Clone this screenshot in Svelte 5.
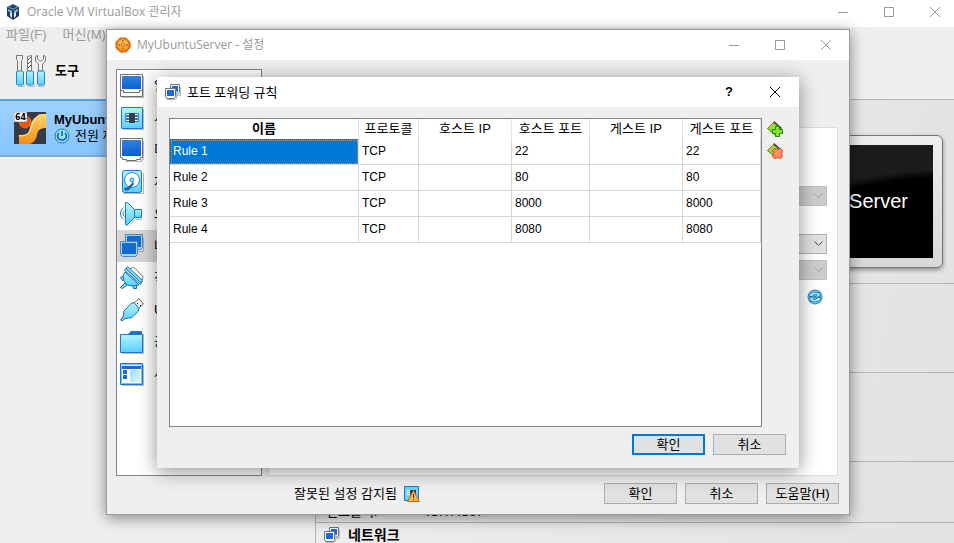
<script lang="ts">
	const categories = [
		{ icon: 'general', label: '일반' },
		{ icon: 'system', label: '시스템' },
		{ icon: 'display', label: '디스플레이' },
		{ icon: 'storage', label: '저장소' },
		{ icon: 'audio', label: '오디오' },
		{ icon: 'network', label: '네트워크' },
		{ icon: 'serial', label: '직렬 포트' },
		{ icon: 'usb', label: 'USB' },
		{ icon: 'folder', label: '공유 폴더' },
		{ icon: 'ui', label: '사용자 인터페이스' }
	];

	const headers = ['이름', '프로토콜', '호스트 IP', '호스트 포트', '게스트 IP', '게스트 포트'];

	const rules = [
		{ name: 'Rule 1', protocol: 'TCP', hostIp: '', hostPort: 22, guestIp: '', guestPort: 22 },
		{ name: 'Rule 2', protocol: 'TCP', hostIp: '', hostPort: 80, guestIp: '', guestPort: 80 },
		{ name: 'Rule 3', protocol: 'TCP', hostIp: '', hostPort: 8000, guestIp: '', guestPort: 8000 },
		{ name: 'Rule 4', protocol: 'TCP', hostIp: '', hostPort: 8080, guestIp: '', guestPort: 8080 }
	];

	let category = $state('network');
	let selected = $state(0);
</script>

{#snippet windowButtons()}
	<div class="window-buttons">
		<button aria-label="최소화"><svg width="16" height="16"><path d="M3 8.500h10" /></svg></button>
		<button aria-label="최대화"><svg width="16" height="16"><path d="M3.500 3.500h9v9h-9z" /></svg></button>
		<button aria-label="닫기"><svg width="16" height="16"><path d="M3 3l10 10M13 3L3 13" /></svg></button>
	</div>
{/snippet}

{#snippet screens()}
	<svg width="16" height="16" viewBox="0 0 16 16">
		<path d="M6 12h10V3h-1v8H6z" fill="#bbb" />
		<path d="M5.500 0.500h9v8l-1 1.500h-7l-1-1.500z" fill="#fff" stroke="#6d727a" />
		<path d="M7 2h6v6H7z" fill="#1565d8" />
		<path d="M2 16h9V7h1v8H2z" fill="#bbb" />
		<path d="M0.500 4.500h10v8l-1 2h-8l-1-2z" fill="#fff" stroke="#6d727a" />
		<path d="M2 6h7v6H2z" fill="#1a6bdc" />
	</svg>
{/snippet}

{#snippet categoryIcon(name: string)}
	<svg width="25" height="25" viewBox="0 0 25 25">
		{#if name === 'general'}
			<path d="M2 23h21V2h1v22H2z" fill="#bbb" />
			<path d="M0.500 0.500h22v22h-22z" fill="#fff" stroke="#6d727a" />
			<path d="M2 2h19v13H2z" fill="url(#deep)" />
			<path d="M0.500 16.500h3v2h16v-2h3" fill="none" stroke="#6d727a" />
		{:else if name === 'system'}
			<path d="M3 23h20V3h1v21H3z" fill="#bbb" />
			<path d="M1.500 1.500h21v21h-21z" fill="url(#sky)" stroke="#1b77d5" />
			<path d="M5.500 7.500h13v2h-13zM5.500 10.500h13v2h-13zM5.500 13.500h13v2h-13z" fill="#fff" stroke="#287dcc" />
			<path d="M9 7h6v10H9z" fill="#353d47" />
		{:else if name === 'display'}
			<path d="M5 23h15l3-3V3h1v18l-3 3H5z" fill="#bbb" />
			<path d="M0.500 0.500h22v19h-2v2h-4v1h-10v-1h-4v-2h-2z" fill="#fff" stroke="#6d727a" />
			<path d="M2 2h19v16H2z" fill="url(#deep)" />
		{:else if name === 'storage'}
			<path d="M3 23h20V3h1v21H3z" fill="#bbb" />
			<rect x="2.500" y="0.500" width="19" height="22" rx="2" fill="url(#sky)" stroke="#1b77d5" />
			<circle cx="12" cy="10" r="7.500" fill="#fff" stroke="#2f87d8" />
			<circle cx="12" cy="10" r="2" fill="#7cdcfd" stroke="#2f87d8" />
			<path d="M4 18l4-1 5-5 1 2-5 6-4 1z" fill="#1767bd" />
		{:else if name === 'audio'}
			<path d="M14 17h8v1H15zM6 23h3l5-6v2l-5 5H6z" fill="#bbb" />
			<path d="M14.500 7.500h7v8h-7z" fill="url(#sky)" stroke="#1b77d5" />
			<path d="M5.500 0.500h2l7 7v8l-7 7h-2z" fill="url(#sky)" stroke="#1b77d5" />
			<path d="M3.500 5.500c-4 3-4 9 0 12M4.500 8.500c-2 2-2 4 0 6" fill="none" stroke="#1b77d5" />
		{:else if name === 'network'}
			<path d="M9 17h14V4h1v14H9z" fill="#aaa" />
			<path d="M5.500 0.500h17v13l-2 2h-13l-2-2z" fill="#9bd9f7" stroke="#5484b0" />
			<path d="M7 2h14v11H7z" fill="#126bd0" />
			<path d="M0.500 7.500h17v13l-2 2h-13l-2-2z" fill="#9bd9f7" stroke="#5484b0" />
			<path d="M2 9h14v11H2z" fill="#126bd0" />
		{:else if name === 'serial'}
			<path d="M9.500 3.500l4-2.500 9.500 9.500-1 4z" fill="#fff" stroke="#777" />
			<path d="M0.500 11.500l4-2 2 3-4 2zM0.500 21.500l5-5 2 2-5 4zM12.500 18.500h4v4h-3z" fill="#7cdcfd" stroke="#1669bc" />
			<path d="M5 6l14 13-6 1-6-1-3-4-1-5z" fill="url(#sky)" stroke="#1669bc" />
			<path d="M4.500 4.500l3-4 15 14-2 4z" fill="#8ce6ff" stroke="#1669bc" />
			<path d="M6 2.500l15 14" stroke="#1669bc" />
		{:else if name === 'usb'}
			<path d="M13 6l6-5.500 4.500 5.500-6 5z" fill="#fff" stroke="#666" />
			<path d="M17 5h1v1h-1zM20 7h1v1h-1z" fill="#333" />
			<path d="M11 5.500l3-1 5 6-1 3-6 6-7 1-3 2.500-1.500-1L3 19l1-6z" fill="url(#sky)" stroke="#1669bc" />
		{:else if name === 'folder'}
			<path d="M2 23h21V4h1v20H2z" fill="#bbb" />
			<path d="M8 4l3-3h11v4H8z" fill="#2871cd" />
			<path d="M0.500 4.500h22v18h-22z" fill="url(#sky)" stroke="#1b77d5" />
		{:else}
			<path d="M2 23h21V3h1v21H2z" fill="#bbb" />
			<path d="M0.500 1.500h22v21h-22z" fill="#fff" stroke="#1b77d5" />
			<path d="M1.500 2.500h20v19h-20z" fill="none" stroke="#64ccf8" />
			<path d="M2 4h19v3H2zM3 8h4v4H3zM3 13h4v4H3z" fill="#1f69cd" />
			<path d="M10 8h10v12H10z" fill="url(#pale)" />
		{/if}
	</svg>
{/snippet}

{#snippet combo(label: string, disabled: boolean)}
	<div class="combo" class:disabled>
		<select aria-label={label} {disabled}><option></option></select>
		<svg width="9" height="6"><path d="M0.500 0.500l4 4 4-4" /></svg>
	</div>
{/snippet}

<svg class="defs" width="0" height="0" aria-hidden="true">
	<defs>
		<linearGradient id="deep" x2="0" y2="1"><stop stop-color="#3481da" /><stop offset="1" stop-color="#0562d6" /></linearGradient>
		<linearGradient id="sky" x2="0" y2="1"><stop stop-color="#b5f4ff" /><stop offset="1" stop-color="#58d0ff" /></linearGradient>
		<linearGradient id="pale" x2="1" y2="1"><stop stop-color="#8de1f8" /><stop offset="1" stop-color="#e1f8ff" /></linearGradient>
		<linearGradient id="gold" x2="0" y2="1"><stop stop-color="#ffd768" /><stop offset="1" stop-color="#f38c16" /></linearGradient>
	</defs>
</svg>

<div class="desktop">
	<main class="manager">
		<header class="titlebar">
			<svg width="16" height="16" viewBox="0 0 16 16">
				<path d="M8 0l6 3v9l-6 4-6-4V3z" fill="#1d3c63" />
				<path d="M2 3l6-3 6 3-6 3z" fill="#688baa" />
				<path d="M4 3l4-2 4 2-4 1z" fill="#173153" />
				<path d="M3 5l4 2v2L3 7zM13 5L9 7v2l4-2z" fill="#9cb9d1" />
				<path d="M5 8l2 1v5L5 12zM11 8L9 9v5l2-2z" fill="#dbe6ef" />
			</svg>
			<h1>Oracle VM VirtualBox 관리자</h1>
			{@render windowButtons()}
		</header>
		<nav class="menubar">
			<button>파일(F)</button>
			<button>머신(M)</button>
		</nav>
		<div class="workspace">
			<aside>
				<button class="tools">
					<svg width="32" height="34" viewBox="0 0 32 34">
						<path d="M2.500 32h6l1-2v3h-6zM12.500 32h6l1-2v3h-6zM22.500 32h6l1-2v3h-6z" fill="#bbb" />
						<path d="M1.500 1.500h6v4l-1 1v11h-4v-11l-1-1z" fill="#eee" stroke="#777" />
						<path d="M12.500 17V2.500l4-1V17z" fill="#fff" stroke="#777" />
						<path d="M13 6l3-3M13 10l3-3M13 14l3-3" stroke="#555" />
						<path d="M23.500 17V10l-3-3V3l2-2v4l2 2h2l2-2V1l2 2v4l-3 3v7z" fill="#f6f6f6" stroke="#777" />
						<path d="M1.500 18l1-1h5l1 1v12l-1 1h-5l-1-1zM11.500 18l1-1h5l1 1v12l-1 1h-5l-1-1zM22.500 18l1-1h5l1 1v12l-1 1h-5l-1-1z" fill="url(#sky)" stroke="#2584d1" />
					</svg>
					도구
				</button>
				<button class="machine">
					<svg width="32" height="32" viewBox="0 0 32 32">
						<path d="M0 0h32v32H0z" fill="#353a45" />
						<circle cx="11" cy="10" r="6.500" fill="#e85b17" />
						<path d="M32 2v14c-6 0-8 2-9 7s-4 8-7 9H5v-9c7 1 10-1 11-7 1-7 4-11 11-14z" fill="url(#gold)" />
						<path d="M5 23.500c8 1 11-2 12-8 1-6 4-9 9-13" fill="none" stroke="#ffdb83" stroke-width="1.500" />
						<path d="M0 0h13v10H0z" fill="#fff" stroke="#555" stroke-width="0.500" />
						<text x="1" y="8">64</text>
					</svg>
					<span>
						<b>MyUbuntuServer</b>
						<span class="state">
							<svg width="16" height="16" viewBox="0 0 16 16">
								<circle cx="8" cy="8" r="7" fill="#94e5ff" stroke="#1b72c2" />
								<path d="M5 5c-3 3-1 7 3 7s6-4 3-7M8 3v5" fill="none" stroke="#155da4" stroke-width="1.500" />
							</svg>
							전원 꺼짐
						</span>
					</span>
				</button>
			</aside>
			<div class="details">
				<section class="preview"><div class="monitor"><div class="screen">MyUbuntuServer</div></div></section>
				<section class="system"></section>
				<section class="storage"></section>
				<section class="audio"><span>컨트롤러:</span><span>ICH AC97</span></section>
				<section class="net">{@render screens()}<h2>네트워크</h2></section>
			</div>
		</div>
	</main>

	<section class="window settings">
		<header class="titlebar">
			<svg width="16" height="16" viewBox="0 0 16 16">
				<circle cx="8" cy="8" r="6.500" fill="url(#gold)" stroke="#e27418" stroke-width="2" />
				<circle cx="8" cy="8" r="7.500" fill="none" stroke="#e27418" stroke-dasharray="4 2" />
				<path d="M7 3h2v2H7zM7 11h2v2H7zM3 7h2v2H3zM11 7h2v2h-2z" fill="#e8741a" />
				<circle cx="8" cy="8" r="1.500" fill="#fff0c0" stroke="#d95d0a" />
			</svg>
			<h1>MyUbuntuServer - 설정</h1>
			{@render windowButtons()}
		</header>
		<div class="settings-body">
			<div class="categories">
				{#each categories as item}
					<button class:active={category === item.icon} onclick={() => (category = item.icon)}>
						{@render categoryIcon(item.icon)}
						{item.label}
					</button>
				{/each}
			</div>
			<div class="adapter">
				{@render combo('다음에 연결됨', true)}
				{@render combo('어댑터 종류', false)}
				{@render combo('무작위 모드', true)}
				<button class="refresh" aria-label="MAC 주소 새로 고침">
					<svg width="16" height="16" viewBox="0 0 16 16">
						<circle cx="8" cy="8" r="7" fill="#79d9fb" stroke="#2a82cf" />
						<path d="M2 7c1-4 6-5 9-3l2-1v5H8l2-2C8 5 6 6 5 8zM14 9c-1 4-6 5-9 3l-2 1V8h5l-2 2c2 1 4 0 5-2z" fill="#b1efff" stroke="#1c70b8" />
					</svg>
				</button>
			</div>
		</div>
		<footer>
			<p>잘못된 설정 감지됨</p>
			<svg width="16" height="16" viewBox="0 0 16 16">
				<path d="M0.500 0.500h14v14h-14z" fill="#68d4fb" stroke="#1b77d5" />
				<path d="M3 4h3v1H3zM3 6h3v1H3zM3 8h3v1H3z" fill="#fff" />
				<path d="M6 4h6v6H6z" fill="#353d47" />
				<path d="M9.500 4.500l6 11h-12z" fill="#ffba3c" stroke="#df5b12" />
				<path d="M9 8h1v4H9zM9 13h1v1H9z" fill="#222" />
			</svg>
			<div class="actions">
				<button class="push">확인</button>
				<button class="push">취소</button>
				<button class="push">도움말(H)</button>
			</div>
		</footer>
	</section>

	<section class="window forwarding">
		<header class="titlebar">
			{@render screens()}
			<h1>포트 포워딩 규칙</h1>
			<div class="window-buttons">
				<button class="help" aria-label="도움말">?</button>
				<button aria-label="닫기"><svg width="16" height="16"><path d="M3 3l10 10M13 3L3 13" /></svg></button>
			</div>
		</header>
		<div class="rules">
			<div class="table-box">
				<table>
					<thead>
						<tr>
							{#each headers as header}
								<th>{header}</th>
							{/each}
						</tr>
					</thead>
					<tbody>
						{#each rules as rule, i}
							<tr onclick={() => (selected = i)}>
								<td class:selected={selected === i}>{rule.name}</td>
								<td>{rule.protocol}</td>
								<td>{rule.hostIp}</td>
								<td>{rule.hostPort}</td>
								<td>{rule.guestIp}</td>
								<td>{rule.guestPort}</td>
							</tr>
						{/each}
					</tbody>
				</table>
			</div>
			<div class="tool-column">
				<button aria-label="규칙 추가">
					<svg width="16" height="16" viewBox="0 0 16 16">
						<path d="M7 0l8 7-2 2-7-7z" fill="#333" />
						<path d="M6.500 1.500l7 6-6 6-7-6z" fill="#8ce336" stroke="#41801c" />
						<path d="M0.500 7.500l6-6" stroke="#d8502d" />
						<path d="M8.500 5.500h4v3h3v4h-3v3h-4v-3h-3v-4h3z" fill="#83e62d" stroke="#278711" />
					</svg>
				</button>
				<button aria-label="규칙 제거">
					<svg width="16" height="16" viewBox="0 0 16 16">
						<path d="M7 0l8 7-2 2-7-7z" fill="#333" />
						<path d="M6.500 1.500l7 6-6 6-7-6z" fill="#8ce336" stroke="#41801c" />
						<path d="M0.500 7.500l6-6" stroke="#d8502d" />
						<path d="M5.500 7.500l2-2 3 1 3-1 2 2-1 3 1 3-2 2-3-1-3 1-2-2 1-3z" fill="#ff8d65" stroke="#dc3b15" />
					</svg>
				</button>
			</div>
		</div>
		<div class="actions">
			<button class="push default">확인</button>
			<button class="push">취소</button>
		</div>
	</section>
</div>

<style>
	:global(body) {
		margin: 0;
	}

	.desktop {
		position: relative;
		min-height: 100vh;
		overflow: hidden;
		background: #efefef;
		color: #000;
		font: 13px/16px 'Liberation Sans', 'Noto Sans CJK KR', sans-serif;
	}

	.desktop * {
		box-sizing: border-box;
	}

	.defs {
		position: absolute;
	}

	svg {
		display: block;
		flex: none;
	}

	button {
		margin: 0;
		padding: 0;
		border: 0;
		background: none;
		color: inherit;
		font: inherit;
	}

	h1,
	h2,
	p {
		margin: 0;
	}

	.manager {
		display: flex;
		flex-direction: column;
		height: 100vh;
	}

	.titlebar {
		display: flex;
		align-items: center;
		gap: 6px;
		height: 30px;
		padding: 0 15px 0 8px;
		background: #fff;
		color: #999;
	}

	.titlebar h1 {
		flex: 1;
		font: 12px/16px 'Open Sans', 'Noto Sans CJK KR', sans-serif;
	}

	.window-buttons {
		display: flex;
		gap: 30px;
	}

	.window-buttons button {
		width: 16px;
		height: 16px;
	}

	.window-buttons path {
		fill: none;
		stroke: currentColor;
	}

	.window-buttons .help {
		font-weight: bold;
	}

	.manager > .titlebar {
		height: 27px;
		padding: 0 11px 4px 5px;
	}

	.menubar {
		display: flex;
		gap: 16px;
		height: 16px;
		padding-left: 6px;
		color: #999;
	}

	.workspace {
		display: flex;
		flex: 1;
		min-height: 0;
	}

	aside {
		width: 315px;
	}

	.tools,
	.machine {
		display: flex;
		align-items: center;
		gap: 8px;
		width: 100%;
		height: 56px;
		padding-left: 15px;
		font-weight: bold;
		text-align: left;
	}

	.machine {
		height: 58px;
		padding-left: 14px;
		border-top: 2px solid #4da3e9;
		border-bottom: 2px solid #83adcf;
		background: linear-gradient(#9ed0ff, #85c5ff);
		font-weight: normal;
	}

	.machine text {
		font: bold 8px 'DejaVu Sans', sans-serif;
	}

	.state {
		display: flex;
		gap: 5px;
	}

	.details {
		display: flex;
		flex-direction: column;
		flex: 1;
		margin-top: 56px;
		overflow: hidden;
		border-left: 1px solid #b4b4b4;
		background: linear-gradient(100deg, #efefef, #e2e2e2);
	}

	.details section {
		flex: none;
		border-top: 1px solid #b4b4b4;
	}

	.preview {
		display: flex;
		justify-content: flex-end;
		height: 184px;
		padding: 35px 11px 0 0;
	}

	.monitor {
		width: 220px;
		height: 133px;
		padding: 9px;
		border: 1px solid #777;
		border-radius: 6px;
		background: linear-gradient(#eee, #d8d8d8);
		box-shadow: 0 2px 4px #888;
	}

	.screen {
		height: 113px;
		background: radial-gradient(ellipse 100% 75% at 110% 100%, #000 95%, #1c1c1c 105%);
		color: #fff;
		font-size: 20px;
		line-height: 113px;
		text-align: center;
	}

	.system,
	.storage {
		height: 89px;
	}

	.details .audio {
		display: grid;
		grid-template-columns: 100px 1fr;
		align-items: end;
		height: 61px;
		padding: 0 10px 2px;
	}

	.net {
		display: flex;
		gap: 8px;
		padding: 4px 8px;
	}

	.net h2 {
		font-size: 14px;
		line-height: 16px;
	}

	.window {
		position: absolute;
		background: #efefef;
	}

	.settings {
		top: 29px;
		right: 104px;
		left: 106px;
		border: 1px solid #999;
		box-shadow: 0 3px 14px rgba(0, 0, 0, 0.45);
	}

	.settings-body {
		display: flex;
		gap: 6px;
		padding: 9px 11px 0 9px;
	}

	.categories {
		width: 146px;
		height: 407px;
		border: 1px solid #7f848e;
		background: #fff;
	}

	.categories button {
		display: flex;
		align-items: center;
		gap: 9px;
		width: 100%;
		height: 32px;
		padding-left: 3px;
		white-space: nowrap;
	}

	.categories .active {
		background: #d6d6d6;
	}

	.adapter {
		display: flex;
		flex-direction: column;
		flex: 1;
		align-items: flex-end;
		gap: 6px;
		margin-top: 58px;
		padding: 58px 10px 0;
		border: 1px solid #dcdcdc;
		background: #fff;
	}

	.combo {
		display: grid;
		width: 400px;
		height: 20px;
	}

	.combo:first-child {
		margin-bottom: 22px;
	}

	.combo > * {
		grid-area: 1 / 1;
	}

	.combo select {
		width: 100%;
		height: 100%;
		border: 1px solid #adadad;
		border-radius: 0;
		background: #e1e1e1;
		appearance: none;
	}

	.combo select:disabled {
		border-color: #bfbfbf;
		background: #ccc;
		opacity: 1;
	}

	.combo svg {
		align-self: center;
		justify-self: end;
		margin-right: 4px;
		pointer-events: none;
	}

	.combo path {
		fill: none;
		stroke: #444;
	}

	.combo.disabled path {
		stroke: #a0a0a0;
	}

	.refresh {
		margin: 3px 4px 0 0;
	}

	.settings footer {
		display: flex;
		align-items: center;
		gap: 7px;
		padding: 7px 10px 10px 187px;
	}

	.actions {
		display: flex;
		justify-content: flex-end;
		gap: 8px;
		margin-left: auto;
	}

	.push {
		width: 73px;
		height: 21px;
		border: 1px solid #adadad;
		background: #e1e1e1;
		line-height: 16px;
	}

	.push.default {
		border: 2px solid #0078d7;
	}

	.forwarding {
		top: 77px;
		right: 155px;
		left: 157px;
		padding-bottom: 13px;
		box-shadow: 0 3px 18px rgba(0, 0, 0, 0.45);
	}

	.forwarding .titlebar {
		padding-right: 16px;
		color: #000;
	}

	.forwarding h1 {
		font-size: 13px;
	}

	.forwarding .actions {
		padding-right: 13px;
	}

	.rules {
		display: flex;
		gap: 5px;
		padding: 11px 16px 7px 12px;
	}

	.table-box {
		flex: 1;
		height: 309px;
		border: 1px solid #7f848e;
		background: #fff;
	}

	table {
		width: 100%;
		border-collapse: separate;
		border-spacing: 0;
		table-layout: fixed;
		font-size: 12px;
	}

	th {
		height: 20px;
		padding: 0;
		border-right: 1px solid #e5e5e5;
		font-size: 13px;
		font-weight: normal;
		white-space: nowrap;
	}

	th:first-child {
		font-weight: bold;
	}

	th:nth-child(2) {
		width: 60px;
	}

	th:nth-child(3),
	th:nth-child(5) {
		width: 93px;
	}

	th:nth-child(4),
	th:nth-child(6) {
		width: 78px;
	}

	td {
		height: 26px;
		padding: 0 3px 2px;
		border-right: 1px solid #d8d8d8;
		border-bottom: 1px solid #d8d8d8;
	}

	td.selected {
		outline: 1px dotted #ff8728;
		outline-offset: -2px;
		background: #0078d7;
		background-clip: padding-box;
		color: #fff;
	}

	.tool-column {
		display: flex;
		flex-direction: column;
		gap: 6px;
		padding-top: 3px;
	}
</style>
